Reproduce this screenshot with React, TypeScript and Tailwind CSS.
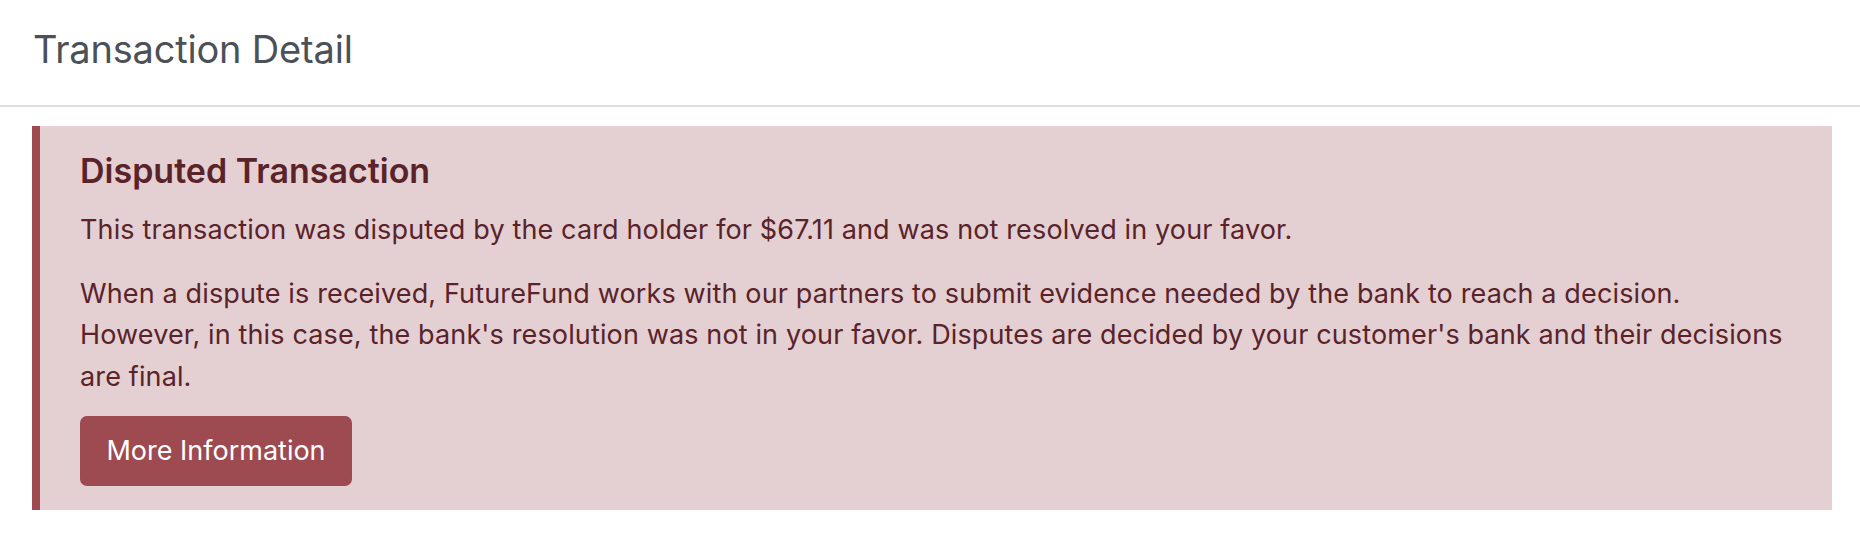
export default function App() {
  return (
    <div className="min-h-screen bg-white font-['Inter','Liberation_Sans',sans-serif]">
      {/* Page header */}
      <div className="border-b-2 border-[#dedede] px-[33px] pt-[25px] pb-[31px]">
        <h1 className="text-[38px] leading-[49px] font-normal tracking-[-0.005em] text-[#4b5157]">
          Transaction Detail
        </h1>
      </div>

      {/* Dispute alert */}
      <div className="ml-[32px] mr-[28px] mt-[19px] border-l-[8px] border-[#9e4a51] bg-[#e4cfd2] pt-[24px] pr-[48px] pb-[24px] pl-[40px] text-[#5a2329]">
        <h4 className="text-[34px] leading-[41px] font-semibold">
          Disputed Transaction
        </h4>
        <p className="mt-[18px] text-[27px] leading-[41.5px] tracking-[0.005em]">
          This transaction was disputed by the card holder for $67.11 and was
          not resolved in your favor.
        </p>
        <p className="mt-[22px] text-[27px] leading-[41.5px] tracking-[0.005em]">
          When a dispute is received, FutureFund works with our partners to
          submit evidence needed by the bank to reach a decision. However, in
          this case, the bank's resolution was not in your favor. Disputes are
          decided by your customer's bank and their decisions are final.
        </p>
        <button
          type="button"
          className="mt-[19px] h-[70px] w-[272px] rounded-[7px] bg-[#9e4a51] text-[27px] text-white"
        >
          More Information
        </button>
      </div>
    </div>
  );
}
